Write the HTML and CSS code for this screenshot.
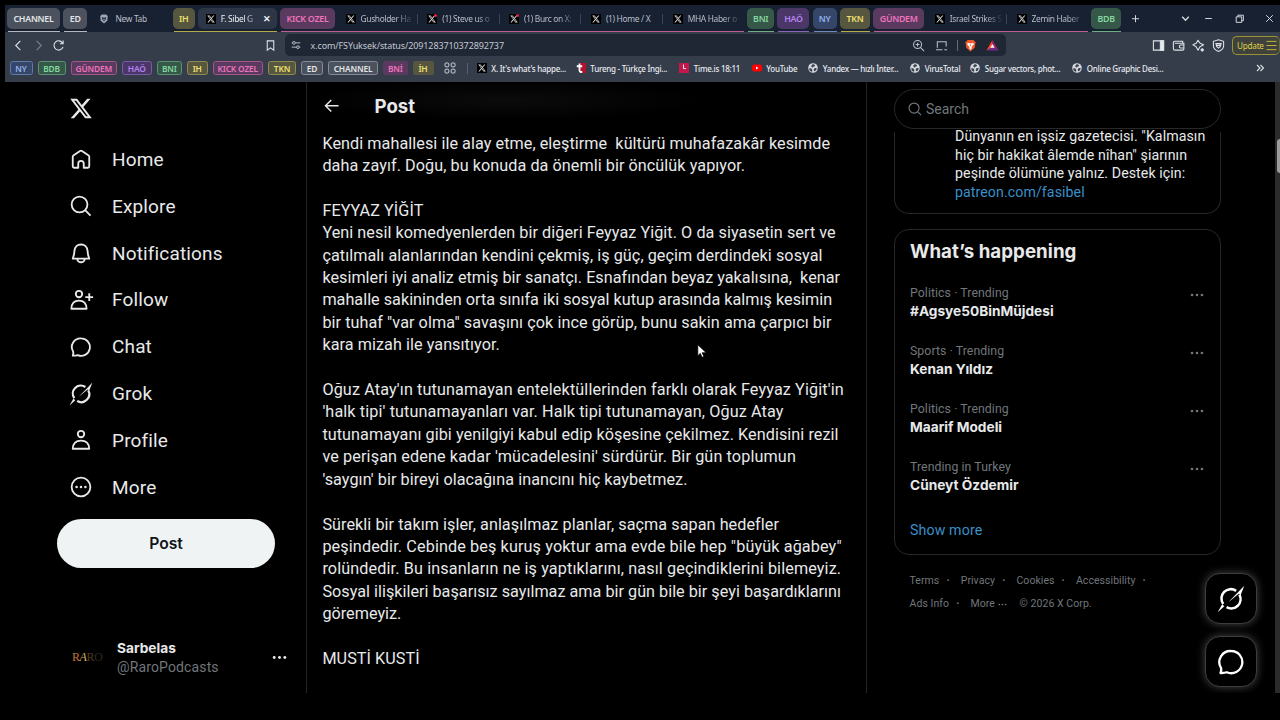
FILE: index.html
```html
<!DOCTYPE html>
<html lang="tr">
<head>
<meta charset="utf-8">
<title>Post / X</title>
<link rel="stylesheet" href="styles.css">
</head>
<body>
<svg width="0" height="0" class="defs">
  <symbol id="x" viewBox="0 0 24 24"><path fill="currentColor" d="M18.244 2.25h3.308l-7.227 8.26 8.502 11.24H16.17l-5.214-6.817L4.99 21.75H1.68l7.73-8.835L1.254 2.25H8.08l4.713 6.231zm-1.161 17.52h1.833L7.084 4.126H5.117z"/></symbol>
  <symbol id="grok" viewBox="0 0 24 24"><path d="M5.300 16.200A8 8 0 0 1 16.400 5M19.200 8.200A8 8 0 0 1 8.200 19" fill="none" stroke="currentColor" stroke-width="2.200"/><path fill="currentColor" d="M23.400.6 20.300 8.600 18.600 7.600 9.500 15 18 6.200ZM.6 23.400 4.400 16.500 6.300 18.300Z"/></symbol>
  <symbol id="chat" viewBox="0 0 24 24"><path fill="none" stroke="currentColor" stroke-width="2" stroke-linejoin="round" d="M12.200 2.600a9.500 9.500 0 1 1-3.800 18.200c-1.500.5-3.200.7-5.400.6.7-1.500.8-2.800.4-4.400A9.500 9.500 0 0 1 12.200 2.600Z"/></symbol>
  <symbol id="search" viewBox="0 0 24 24"><g fill="none" stroke="currentColor" stroke-width="2"><circle cx="10.400" cy="10.400" r="8.600"/><path d="m16.500 16.500 5.900 5.900"/></g></symbol>
  <symbol id="dots" viewBox="0 0 24 24"><g fill="currentColor"><circle cx="3.500" cy="12" r="2.300"/><circle cx="12" cy="12" r="2.300"/><circle cx="20.500" cy="12" r="2.300"/></g></symbol>
  <symbol id="globe" viewBox="0 0 24 24"><circle cx="12" cy="12" r="11.500" fill="#d3d7dc"/><path fill="#3b4350" d="M3 13c3-1 6 0 7 3 0 3 1 4-1 5C5 20 3 17 3 13ZM11 3c3 0 5 1 6 3-1 3-4 2-5 4s-4 0-4-2 1-3 3-5ZM15 13c3-1 5-1 6 0-1 4-3 6-6 7-1-2-2-5 0-7Z"/></symbol>
</svg>

<div class="browser">
  <div class="tabs">
    <div class="group u-grey"><span class="chip c-grey w53">CHANNEL</span></div>
    <div class="group u-grey"><span class="chip c-grey w24">ED</span></div>
    <div class="tab newtab"><svg class="fav" viewBox="0 0 24 24"><path fill="#9aa3b1" d="M7 1h10l4 4-1 11-8 7-8-7L3 5Z"/><path fill="#1b2433" d="m7 7 3 2h4l3-2-1 6-4 5-4-5Z"/><path fill="#c5cbd5" d="m9 12 3 1 3-1-3 4Z"/></svg><span>New Tab</span></div>
    <div class="group u-yellow"><span class="chip c-yellow w22">IH</span><div class="tab active"><svg class="fav xf"><use href="#x"/></svg><span class="fade">F. Sibel G</span><b class="cross">✕</b></div></div>
    <div class="group u-pink"><span class="chip c-pink w55">KICK OZEL</span>
      <div class="tab sep"><svg class="fav xf"><use href="#x"/></svg><span class="fade">Gusholder Ha</span></div>
      <div class="tab sep"><svg class="fav xf"><use href="#x"/></svg><i class="badge"></i><span class="fade">(1) Steve us o</span></div>
      <div class="tab sep"><svg class="fav xf"><use href="#x"/></svg><i class="badge"></i><span class="fade">(1) Burc on X:</span></div>
      <div class="tab sep"><svg class="fav xf"><use href="#x"/></svg><span>(1) Home / X</span></div>
      <div class="tab"><svg class="fav xf"><use href="#x"/></svg><span class="fade">MHA Haber o</span></div>
    </div>
    <div class="group u-green"><span class="chip c-green w27">BNI</span></div>
    <div class="group u-purple"><span class="chip c-purple w32">HAÖ</span></div>
    <div class="group u-blue"><span class="chip c-blue w24">NY</span></div>
    <div class="group u-yellow"><span class="chip c-yellow w30">TKN</span></div>
    <div class="group u-pink"><span class="chip c-pink w51">GÜNDEM</span>
      <div class="tab sep"><svg class="fav xf"><use href="#x"/></svg><span class="fade">Israel Strikes S</span></div>
      <div class="tab"><svg class="fav xf"><use href="#x"/></svg><span class="fade">Zemin Haber</span></div>
    </div>
    <div class="group u-green"><span class="chip c-green w30">BDB</span></div>
    <div class="winctl">
      <svg viewBox="0 0 10 10" class="plus"><path d="M5 2v6.400M1.800 5.200h6.400"/></svg>
      <svg viewBox="0 0 10 10"><path d="M2 3.500l3 3 3-3" stroke-width="1.300"/></svg>
      <svg viewBox="0 0 10 10"><path d="M2 5h6"/></svg>
      <svg viewBox="0 0 10 10"><path d="M2 3.500h5v5H2zM3.500 3.500V2h5v5H7"/></svg>
      <svg viewBox="0 0 10 10"><path d="M2 2l6 6M8 2 2 8"/></svg>
    </div>
  </div>

  <div class="toolbar">
    <div class="navbtns">
      <svg viewBox="0 0 14 14"><path d="M9 2 4 7l5 5"/></svg>
      <svg viewBox="0 0 14 14" class="dim"><path d="M5 2l5 5-5 5"/></svg>
      <svg viewBox="0 0 14 14"><path d="M11.500 4.500a5 5 0 1 0 .4 4M12 1.500v3.600H8.500"/></svg>
      <svg viewBox="0 0 14 14" class="mark"><path d="M3.500 2h7v10L7 9.500 3.500 12z"/></svg>
    </div>
    <div class="url">
      <svg viewBox="0 0 14 14" class="tune"><path d="M2 4.500h1M6.500 4.500H12M2 9.500h5.500M11 9.500h1"/><circle cx="4.600" cy="4.500" r="1.600"/><circle cx="9.200" cy="9.500" r="1.600"/></svg>
      <span class="addr">x.com/FSYuksek/status/2091283710372892737</span>
      <div class="urlicons">
        <svg viewBox="0 0 14 14"><circle cx="6" cy="6" r="4.300"/><path d="m9 9 4 4M4 6h4M6 4v4"/></svg>
        <svg viewBox="0 0 14 14"><path d="M2.500 9.500V3h9.500v5M1 11.500h7M10 11.500h3"/></svg>
        <i class="vbar"></i>
        <svg viewBox="0 0 14 14" class="full"><path fill="#f2582a" d="M4 1h6l2.500 2.500-1 6L7 13.500l-4.500-4-1-6z"/><path fill="#fff" d="M4 4l2 .5h2L10 4l.5 2L8 8.500l.5 1.500L7 11.500 5.500 10 6 8.500 3.500 6z"/><path fill="#f2582a" d="M6 6h2L7 8z"/></svg>
        <svg viewBox="0 0 14 14" class="full"><path fill="#ff4724" d="M7 1 .5 12.500 7 9z"/><path fill="#9e1f63" d="m7 1 6.500 11.500L7 9z"/><path fill="#662d91" d="M.5 12.500h13L7 9z"/><path fill="#fff" d="m7 5.500 2.300 4H4.700z"/></svg>
      </div>
    </div>
    <div class="right">
      <svg viewBox="0 0 14 14"><path d="M1.500 2h11v10h-11z"/><path d="M9 2h3.500v10H9z" fill="#e8ebef"/></svg>
      <svg viewBox="0 0 14 14"><path d="M11.500 4.300V2.500h-8.500a1.500 1.500 0 0 0-1.500 1.500v6.500A1.500 1.500 0 0 0 3 12h8.500a1.300 1.300 0 0 0 1.300-1.300V4.500H3M13 6.500H9.500a1.500 1.500 0 0 0 0 3.200H13"/></svg>
      <svg viewBox="0 0 14 14"><path stroke-linejoin="round" d="M6.500 1.300 8.600 4.600 12.500 6.300 8.600 8.300 6.500 12 4.500 8.300 1 6.300 4.500 4.600z"/><path d="M11 10v3.500M9.300 11.800h3.500" stroke-width="1.800"/></svg>
      <svg viewBox="0 0 14 14"><path d="M7 .8 12.500 2.500v5c0 2.700-2.500 4.600-5.500 5.900-3-1.300-5.500-3.200-5.500-5.900v-5zM4.200 5h5.600L9 8 7 9.800 5 8zM5 6.900h4"/></svg>
      <div class="update">Update<svg viewBox="0 0 12 12"><path d="M.5 1.500h11M.5 6h11M.5 10.500h11"/></svg></div>
    </div>
  </div>

  <div class="bookmarks">
    <span class="bm c-blue">NY</span><span class="bm c-green">BDB</span><span class="bm c-pink">GÜNDEM</span><span class="bm c-purple">HAÖ</span><span class="bm c-green">BNI</span><span class="bm c-yellow">IH</span><span class="bm c-pink">KICK OZEL</span><span class="bm c-yellow">TKN</span><span class="bm c-grey">ED</span><span class="bm c-grey">CHANNEL</span><span class="bm c-pink flat">BNİ</span><span class="bm c-yellow flat">İH</span>
    <svg class="apps" viewBox="0 0 12 12"><rect x="1" y="1" width="3.800" height="3.800" rx="1"/><rect x="7.200" y="1" width="3.800" height="3.800" rx="1"/><rect x="1" y="7.200" width="3.800" height="3.800" rx="1"/><rect x="7.200" y="7.200" width="3.800" height="3.800" rx="1"/></svg>
    <div class="link first"><svg class="fav xf"><use href="#x"/></svg>X. It's what's happe...</div>
    <div class="link"><svg class="fav" viewBox="0 0 20 20"><path fill="#b3122d" d="M8 0h12v20H8z"/><path d="M7 1v14q0 3 3 3h2.500M1.500 6.500h11" fill="none" stroke="#fff" stroke-width="3.600"/></svg>Tureng - Türkçe İngi...</div>
    <div class="link"><svg class="fav" viewBox="0 0 20 20"><path fill="#c4174e" d="M0 0h20v20H0z"/><path d="M9 3v8h5" fill="none" stroke="#fff" stroke-width="1.800"/></svg>Time.is 18:11</div>
    <div class="link"><svg class="fav" viewBox="0 0 20 20"><rect y="3" width="20" height="14" rx="4" fill="#f00"/><path fill="#fff" d="m8 7 5 3-5 3z"/></svg>YouTube</div>
    <div class="link"><svg class="fav"><use href="#globe"/></svg>Yandex — hızlı İnter...</div>
    <div class="link"><svg class="fav"><use href="#globe"/></svg>VirusTotal</div>
    <div class="link"><svg class="fav"><use href="#globe"/></svg>Sugar vectors, phot...</div>
    <div class="link"><svg class="fav"><use href="#globe"/></svg>Online Graphic Desi...</div>
    <svg class="more" viewBox="0 0 10 10"><path d="M2 2l3 3-3 3M5.500 2l3 3-3 3"/></svg>
  </div>
</div>

<div class="page">
  <nav class="nav">
    <svg class="logo"><use href="#x"/></svg>
    <a class="item"><svg viewBox="0 0 24 24"><path d="M9 21.500H4.500a1.500 1.500 0 0 1-1.500-1.500V9.600a2 2 0 0 1 1-1.700l7-4.700a2 2 0 0 1 2 0l7 4.700a2 2 0 0 1 1 1.700V20a1.500 1.500 0 0 1-1.500 1.500H15V17a3 3 0 0 0-6 0z"/></svg>Home</a>
    <a class="item"><svg><use href="#search"/></svg>Explore</a>
    <a class="item"><svg viewBox="0 0 24 24"><path d="M12 2.700c-4 0-6.800 2.900-7.100 6.800L4.400 13.500 3 18.200h18l-1.400-4.700-.5-4C18.800 5.600 16 2.700 12 2.700zM8 18.500a4 3.600 0 0 0 8 0"/></svg>Notifications</a>
    <a class="item"><svg viewBox="0 0 24 24"><circle cx="9.800" cy="5.500" r="3.500"/><path d="M1.500 21.500c.2-5.500 3.200-8.800 8.300-8.800s8.100 3.300 8.300 8.800zM21 4.500v8.500M16.700 8.800h8.500"/></svg>Follow</a>
    <a class="item"><svg><use href="#chat"/></svg>Chat</a>
    <a class="item"><svg class="plain"><use href="#grok"/></svg>Grok</a>
    <a class="item"><svg viewBox="0 0 24 24"><circle cx="12" cy="5.500" r="3.500"/><path d="M3 21.500c.3-5.500 3.700-8.800 9-8.800s8.700 3.300 9 8.800z"/></svg>Profile</a>
    <a class="item"><svg viewBox="0 0 24 24"><circle cx="12" cy="12" r="10.200"/><g class="fill"><circle cx="7.200" cy="12" r="1.400"/><circle cx="12" cy="12" r="1.400"/><circle cx="16.800" cy="12" r="1.400"/></g></svg>More</a>
    <button class="post">Post</button>
    <div class="account">
      <div class="avatar"><span class="r1">R</span><span class="a1">A</span><span class="r2">R</span><span class="o1">O</span></div>
      <div class="who"><b>Sarbelas</b><span>@RaroPodcasts</span></div>
      <svg class="adots"><use href="#dots"/></svg>
    </div>
  </nav>

  <main class="main">
    <header class="head"><svg viewBox="0 0 16 16"><path d="M15 8H2M7.500 2 1.500 8l6 6"/></svg><h2>Post</h2></header>
    <div class="text">Kendi mahallesi ile alay etme, eleştirme  kültürü muhafazakâr kesimde
daha zayıf. Doğu, bu konuda da önemli bir öncülük yapıyor.

FEYYAZ YİĞİT
Yeni nesil komedyenlerden bir diğeri Feyyaz Yiğit. O da siyasetin sert ve
çatılmalı alanlarından kendini çekmiş, iş güç, geçim derdindeki sosyal
<span class="tight">kesimleri iyi analiz etmiş bir sanatçı. Esnafından beyaz yakalısına,  kenar
mahalle sakininden orta sınıfa iki sosyal kutup arasında kalmış kesimin
</span>bir tuhaf "var olma" savaşını çok ince görüp, bunu sakin ama çarpıcı bir
kara mizah ile yansıtıyor.

<span class="loose">Oğuz Atay'ın tutunamayan entelektüllerinden farklı olarak Feyyaz Yiğit'in
'halk tipi' tutunamayanları var. Halk tipi tutunamayan, Oğuz Atay
</span>tutunamayanı gibi yenilgiyi kabul edip köşesine çekilmez. Kendisini rezil
<span class="loose">ve perişan edene kadar 'mücadelesini' sürdürür. Bir gün toplumun
</span>'saygın' bir bireyi olacağına inancını hiç kaybetmez.

Sürekli bir takım işler, anlaşılmaz planlar, saçma sapan hedefler
<span class="loose">peşindedir. Cebinde beş kuruş yoktur ama evde bile hep "büyük ağabey"
rolündedir. Bu insanların ne iş yaptıklarını, nasıl geçindiklerini bilemeyiz.
</span><span class="tight">Sosyal ilişkileri başarısız sayılmaz ama bir gün bile bir şeyi başardıklarını
göremeyiz.</span>

MUSTİ KUSTİ</div>
    <svg class="cursor" viewBox="0 0 12 18"><path d="M1 1v13l3-2.800 2 4.800 2.200-1-2-4.600H11z" fill="#fff" stroke="#000" stroke-width=".8"/></svg>
  </main>

  <aside class="side">
    <div class="search"><svg><use href="#search"/></svg>Search</div>
    <section class="card bio"><div>Dünyanın en işsiz gazetecisi. "Kalmasın
hiç bir hakikat âlemde nîhan" şiarının
peşinde ölümüne yalnız. Destek için:
<a>patreon.com/fasibel</a></div></section>
    <section class="card trends">
      <h3>What’s happening</h3>
      <div class="trend"><div><small>Politics · Trending</small><b>#Agsye50BinMüjdesi</b></div><svg><use href="#dots"/></svg></div>
      <div class="trend"><div><small>Sports · Trending</small><b>Kenan Yıldız</b></div><svg><use href="#dots"/></svg></div>
      <div class="trend"><div><small>Politics · Trending</small><b>Maarif Modeli</b></div><svg><use href="#dots"/></svg></div>
      <div class="trend"><div><small>Trending in Turkey</small><b>Cüneyt Özdemir</b></div><svg><use href="#dots"/></svg></div>
      <a class="showmore">Show more</a>
    </section>
    <footer class="foot">
      <div><span>Terms</span><i>·</i><span>Privacy</span><i>·</i><span>Cookies</span><i>·</i><span>Accessibility</span><i>·</i></div>
      <div><span>Ads Info</span><i>·</i><span>More <svg><use href="#dots"/></svg></span><span class="copy">© 2026 X Corp.</span></div>
    </footer>
    <div class="fabs"><div class="fab"><svg><use href="#grok"/></svg></div><div class="fab"><svg><use href="#chat"/></svg></div></div>
  </aside>
  <div class="scroll"><div class="thumb"></div></div>
</div>
</body>
</html>
```
FILE: styles.css
```css
* { box-sizing: border-box; }
body { margin: 0; height: 720px; overflow: hidden; background: #000; color: #e7e9ea; font-family: Roboto, sans-serif; padding: 5px 0 0 5px; display: flex; flex-direction: column; }
.defs { position: absolute; }
svg { flex: none; display: block; }

/* Browser chrome */
.browser { height: 77px; background: #353d4b; font-family: "Noto Sans", sans-serif; flex: none; }
.tabs { height: 27px; background: #182131; display: flex; gap: 3.250px; padding-left: 2px; }
.group { display: flex; align-items: center; height: 27px; position: relative; }
.group::after { content: ""; position: absolute; left: 1px; right: 0; bottom: 0; height: 1px; background: var(--u); }
.u-grey { --u: #b4b8be; }
.u-yellow { --u: #b5ab49; }
.u-pink { --u: #bd5e93; }
.u-green { --u: #6fae85; }
.u-purple { --u: #8b66b8; }
.u-blue { --u: #7088bd; }
.chip { height: 21px; border-radius: 5px; display: flex; align-items: center; justify-content: center; font-size: 8.800px; font-weight: 600; letter-spacing: -.250px; background: var(--bg); color: var(--fg); white-space: nowrap; }
.c-grey { --bg: #4b525d; --fg: #e3e5e8; --bd: #858b94; }
.c-yellow { --bg: #57563f; --fg: #ede06f; --bd: #8f8a50; }
.c-pink { --bg: #5b3a60; --fg: #ee74bb; --bd: #a2558a; }
.c-green { --bg: #355849; --fg: #86d6a0; --bd: #5a9370; }
.c-purple { --bg: #4a3768; --fg: #b583ee; --bd: #7a5aa8; }
.c-blue { --bg: #354668; --fg: #94b2ee; --bd: #6079a8; }
.w22 { width: 22px; }
.w24 { width: 24px; }
.w27 { width: 27px; }
.w30 { width: 30px; }
.w32 { width: 32px; }
.w51 { width: 51px; }
.w53 { width: 53px; }
.w55 { width: 55px; }
.tab { width: 81.800px; height: 21px; padding-left: 10.500px; display: flex; align-items: center; gap: 5px; font-size: 8.400px; letter-spacing: -.320px; color: #b9bfc9; white-space: nowrap; position: relative; }
.newtab { width: 79px; height: 27px; padding-left: 8.500px; gap: 6.500px; }
.active { width: 79px; margin-left: 3px; padding-left: 8px; background: #2c3647; border-radius: 5px; color: #eef0f3; }
.active .fade { width: 38px; }
.cross { font-size: 8.500px; margin-left: -.5px; }
.sep::after { content: ""; position: absolute; right: -1px; top: 6px; height: 10px; width: 1px; background: #3b4453; }
.fav { width: 10px; height: 10px; }
.xf { background: #000; color: #ddd; padding: .8px; }
.fade { width: 54px; -webkit-mask-image: linear-gradient(90deg, #000 65%, transparent 98%); mask-image: linear-gradient(90deg, #000 65%, transparent 98%); }
.badge { position: absolute; left: 17px; top: 5.500px; width: 3.500px; height: 3.500px; border-radius: 50%; background: #f0213f; }
.winctl { flex: 1; display: grid; grid-template-columns: 48px 24px 22px 40px 21px; grid-template-rows: 27px; align-items: center; justify-items: center; justify-content: end; margin-left: -3.250px; }
.winctl svg { width: 11px; height: 11px; fill: none; stroke: #d4d8de; stroke-width: .9; }
.winctl .plus { justify-self: start; margin-left: 5px; }

.toolbar { height: 26px; display: flex; align-items: center; }
.toolbar svg { width: 13px; height: 13px; fill: none; stroke: #dfe3e8; stroke-width: 1.150; }
.navbtns { width: 280px; display: flex; align-items: center; padding-left: 7px; gap: 7px; }
.navbtns .dim { stroke: #7b828e; }
.navbtns .mark { margin: 0 8.500px 0 auto; }
.url { width: 721px; height: 22px; border-radius: 5px; background: #1f2735; display: flex; align-items: center; padding-left: 5px; }
.url .tune { width: 12px; height: 12px; }
.addr { margin-left: 8.500px; font-size: 9px; letter-spacing: -.110px; color: #c3c8d1; flex: 1; }
.urlicons { display: flex; align-items: center; gap: 9.500px; padding-right: 8px; }
.url svg { stroke: #b9bec8; }
.url .full { stroke: none; margin-right: -.5px; }
.vbar { width: 1px; height: 11px; background: #626a77; margin: 0 -4px 0 0; }
.right { flex: 1; display: flex; align-items: center; justify-content: flex-end; gap: 7px; }
.update { width: 48px; height: 19px; border: 1px solid #9b9136; border-right-color: #6f6b3a; border-radius: 5px; background: #3f423c; color: #ded049; font-size: 8.200px; display: flex; align-items: center; justify-content: space-between; padding: 0 2px 0 4px; letter-spacing: -.250px; }
.toolbar .update svg { stroke: #cabd40; width: 11px; height: 11px; stroke-width: 1; }

.bookmarks { height: 24px; padding: 2.500px 0 0 4.500px; display: grid; justify-content: start; align-items: center; grid-template-rows: 15px; grid-template-columns: 23px 28px 46.500px 29.500px 25.500px 20.500px 50.500px 28px 22px 50px 24.500px 21px 24px 103px 98.500px 67.500px 51.500px 97px 55px 97px 178px 12px; column-gap: 5px; }
.bm { height: 14px; border: 1px solid var(--bd); border-radius: 2.500px; background: var(--bg); color: var(--fg); font-size: 8.400px; font-weight: 600; letter-spacing: -.180px; display: flex; align-items: center; justify-content: center; white-space: nowrap; }
.flat { border-color: transparent; }
.apps { width: 12px; height: 12px; margin-left: 5.500px; fill: none; stroke: #cdd1d8; stroke-width: 1; }
.link { display: flex; align-items: center; gap: 4.800px; font-size: 8px; letter-spacing: -.250px; color: #e8ebef; white-space: nowrap; font-weight: 500; }
.first { border-left: 1px solid #596170; margin-left: -1px; padding-left: 9px; }
.more { width: 10px; fill: none; stroke: #dfe3e8; stroke-width: 1.100; }

/* Left navigation */
.page { height: 611px; display: flex; flex: none; overflow: hidden; position: relative; }
.nav { width: 302px; border-right: 1px solid #222527; padding-left: 65px; display: flex; flex-direction: column; }
.logo { width: 24px; height: 25px; margin: 13.500px -.5px 15.500px -1px; flex: none; }
.item { height: 46.830px; flex: none; display: flex; align-items: center; gap: 20px; font-size: 19px; letter-spacing: .150px; }
.item svg { width: 22px; height: 22px; fill: none; stroke: currentColor; stroke-width: 2; stroke-linejoin: round; overflow: visible; }
.item .plain { stroke: none; width: 24px; height: 24px; margin: 0 -1px; }
.item .fill { fill: currentColor; stroke: none; }
.post { width: 218px; height: 49px; margin: 8.400px 0 0 -13px; border: 0; border-radius: 25px; background: #eff3f4; color: #0f1419; font: 600 15.700px Inter, sans-serif; padding: 0; }
.account { display: flex; align-items: center; margin-top: 69.500px; height: 40px; }
.avatar { width: 47px; padding-left: 2px; font: 12px "Liberation Serif", serif; letter-spacing: -.4px; white-space: nowrap; }
.r1 { color: #c5713c; }
.a1 { color: #d8b25c; font-style: italic; }
.r2 { color: #4a3c22; }
.o1 { color: #33291f; }
.who { display: flex; flex-direction: column; font-size: 14px; line-height: 19px; flex: 1; }
.who b { font: 700 13.700px/19px Inter, sans-serif; }
.who span { color: #71767b; letter-spacing: .130px; }
.adots { width: 15px; height: 15px; margin-right: 19px; }

/* Post */
.main { width: 560px; border-right: 1px solid #222527; padding-left: 15px; position: relative; }
.head { height: 48px; display: flex; align-items: center; gap: 35px; padding-left: 2px; background: radial-gradient(ellipse 200px 20px at 185px 18px, #0b0b0b, #000); }
.head svg { width: 15.500px; height: 15.500px; fill: none; stroke: #e7e9ea; stroke-width: 1.500; }
.head h2 { margin: 0; font: 700 18.600px Inter, sans-serif; }
.text { margin-top: 2.600px; margin-left: .4px; white-space: pre; font-size: 16.200px; line-height: 22.400px; letter-spacing: .060px; }
.loose { letter-spacing: .120px; }
.tight { letter-spacing: .020px; }
.cursor { position: absolute; left: 389.500px; top: 262px; width: 10px; height: 15px; }

/* Sidebar */
.side { width: 408px; padding: 6.500px 0 0 27px; position: relative; }
.search { width: 327px; height: 40px; border: 1px solid #26282a; border-radius: 20px; display: flex; align-items: center; gap: 4.500px; padding-left: 12.500px; font-size: 14px; color: #71767b; }
.search svg { width: 14px; height: 14px; }
.card { width: 327px; border: 1px solid #26282a; border-radius: 15px; display: flow-root; }
.bio { margin-top: 3px; margin-bottom: 15px; height: 82.500px; border-top: 0; border-top-left-radius: 0; border-top-right-radius: 0; padding-left: 60px; }
.bio div { margin-top: -4.500px; white-space: pre; font-size: 14.200px; line-height: 18.650px; letter-spacing: .070px; }
.bio a, .showmore { color: #3a8fc9; }
.trends { height: 326px; padding: 9.500px 16.500px 0 15px; }
.trends h3 { margin: 0 0 17.500px; font: 700 18.700px/23px Inter, sans-serif; letter-spacing: .050px; }
.trend { display: flex; justify-content: space-between; height: 58px; padding-top: 4px; }
.trend div { display: flex; flex-direction: column; }
.trend small { font-size: 12.300px; line-height: 18px; letter-spacing: .070px; color: #71767b; }
.trend b { font: 700 13.700px/19px Inter, sans-serif; }
.trend svg { width: 14px; height: 14px; color: #71767b; margin-top: 4px; }
.showmore { display: block; margin-top: 8px; font-size: 14.200px; line-height: 20px; letter-spacing: .120px; }
.foot { padding: 15px 0 0 15.500px; font-size: 10.500px; line-height: 22.500px; letter-spacing: .060px; color: #71767b; }
.foot div { display: flex; }
.foot i { width: 21.400px; text-align: center; font-style: normal; padding-right: 4px; font-weight: 700; }
.foot svg { display: inline-block; width: 9px; height: 9px; vertical-align: -2px; }
.copy { margin-left: 13px; }
.fabs { position: absolute; left: 338px; top: 491px; display: flex; flex-direction: column; gap: 12px; }
.fab { width: 52px; height: 51px; border: 1px solid #3a3d40; border-radius: 15px; background: #000; box-shadow: 0 0 8px rgba(255, 255, 255, .28); display: flex; align-items: center; justify-content: center; }
.fab svg { width: 28px; height: 28px; color: #fff; }
.scroll { position: absolute; right: 0; top: 0; width: 5px; height: 611px; background: #2b2b2b; }
.thumb { margin: 57px 0 0 2px; height: 34px; background: #9c9c9c; border-radius: 3px 0 0 3px; }
```
